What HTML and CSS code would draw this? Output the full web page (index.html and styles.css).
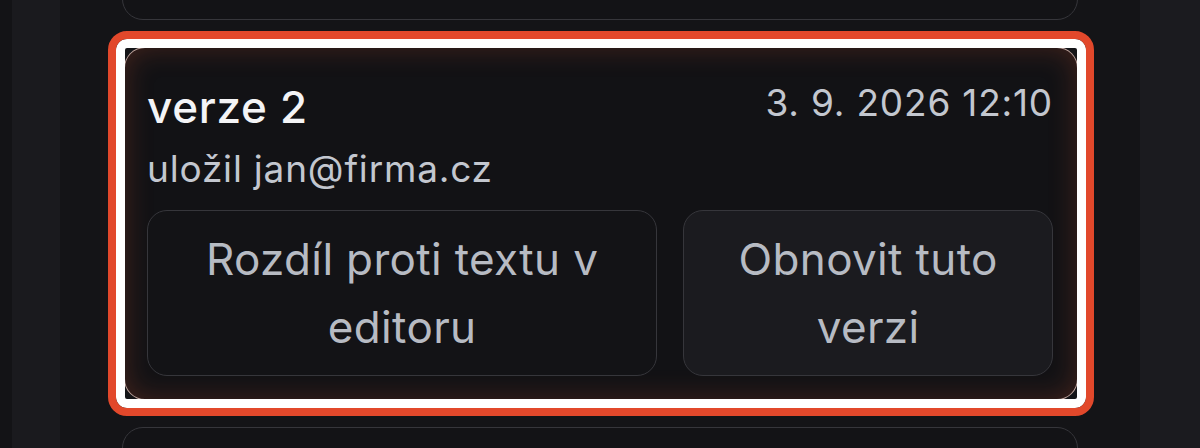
FILE: index.html
```html
<!DOCTYPE html>
<html lang="cs">
<head>
<meta charset="utf-8">
<title>Verze</title>
<link rel="stylesheet" href="styles.css">
</head>
<body>
<div class="app">
  <div class="edge"></div>
  <div class="rail"></div>
  <main class="main">
    <div class="list">
      <section class="card card-prev"></section>
      <section class="card card-focused">
        <div class="card-head">
          <h2 class="title">verze 2</h2>
          <span class="date">3. 9. 2026 12:10</span>
        </div>
        <div class="author">uložil jan@firma.cz</div>
        <div class="actions">
          <button class="btn">Rozdíl proti textu v editoru</button>
          <button class="btn btn-alt">Obnovit tuto verzi</button>
        </div>
      </section>
      <section class="card card-next"></section>
    </div>
  </main>
  <div class="side"></div>
</div>
</body>
</html>
```

FILE: styles.css
```css
html, body {
  margin: 0;
  padding: 0;
  height: 100%;
  background: #141417;
  font-family: Inter, "Noto Sans", sans-serif;
}

.app {
  display: flex;
  height: 448px;
  overflow: hidden;
}

.edge {
  width: 12px;
  flex: none;
  background: #131316;
}

.rail {
  width: 48px;
  flex: none;
  background: #1a1a1e;
}

.side {
  width: 60px;
  flex: none;
  background: #1b1b1f;
}

.main {
  flex: 1;
  background: #141417;
  padding: 0 62px;
  overflow: hidden;
}

.list {
  display: flex;
  flex-direction: column;
  gap: 27px;
  margin-top: -180px;
}

.card {
  box-sizing: border-box;
  border: 1.5px solid #36363b;
  border-radius: 21px;
  background: #131316;
}

.card-prev,
.card-next {
  height: 200px;
}

.card-focused {
  position: relative;
  margin-left: 2px;
  padding: 24px 24px 23px 22px;
  background: #121215;
  border-color: rgba(240, 205, 195, 0.8);
  box-shadow: inset 0 0 28px rgba(170, 70, 45, 0.32);
}

.card-focused::before {
  content: "";
  position: absolute;
  inset: -17px;
  border: 8px solid #e2482b;
  border-radius: 19px;
  box-shadow: inset 0 0 0 9px #ffffff;
  pointer-events: none;
}

.card-head {
  display: flex;
  justify-content: space-between;
  align-items: flex-start;
}

.title {
  margin: 0;
  font-size: 44px;
  line-height: 70px;
  font-weight: 500;
  letter-spacing: 0.7px;
  color: #f4f4f6;
}

.date {
  font-size: 37px;
  line-height: 62px;
  letter-spacing: 0.8px;
  color: #c3c7cf;
}

.author {
  font-size: 37px;
  line-height: 54px;
  letter-spacing: 0.8px;
  color: #c3c7cf;
}

.actions {
  display: grid;
  grid-template-columns: 1.38fr 1fr;
  gap: 26px;
  margin-top: 13.5px;
}

.btn {
  font-family: inherit;
  font-size: 44px;
  line-height: 68px;
  letter-spacing: 0.35px;
  color: #b7bbc3;
  background: #131316;
  border: 1.5px solid #36363b;
  border-radius: 20px;
  padding: 14px 20px;
  text-align: center;
}

.btn-alt {
  background: #1b1b1f;
}
```
